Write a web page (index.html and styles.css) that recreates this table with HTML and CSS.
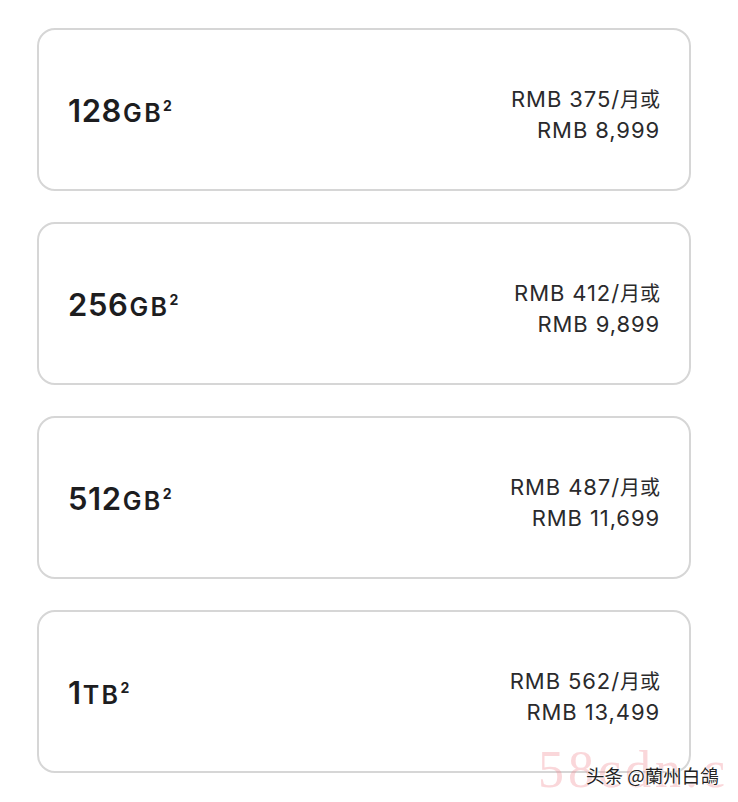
FILE: index.html
```html
<!DOCTYPE html>
<html lang="zh-CN">
<head>
<meta charset="utf-8">
<link rel="stylesheet" href="styles.css">
</head>
<body>
<div class="list">
  <div class="card">
    <div class="cap"><span class="num">128</span><span class="unit">GB</span><sup class="note">2</sup></div>
    <div class="price"><div>RMB 375/<span class="cjk">月或</span></div><div>RMB 8,999</div></div>
  </div>
  <div class="card">
    <div class="cap"><span class="num">256</span><span class="unit">GB</span><sup class="note">2</sup></div>
    <div class="price"><div>RMB 412/<span class="cjk">月或</span></div><div>RMB 9,899</div></div>
  </div>
  <div class="card">
    <div class="cap"><span class="num">512</span><span class="unit">GB</span><sup class="note">2</sup></div>
    <div class="price"><div>RMB 487/<span class="cjk">月或</span></div><div>RMB 11,699</div></div>
  </div>
  <div class="card">
    <div class="cap"><span class="num">1</span><span class="unit">TB</span><sup class="note">2</sup></div>
    <div class="price"><div>RMB 562/<span class="cjk">月或</span></div><div>RMB 13,499</div></div>
  </div>
</div>
<div class="wm">
  <span class="wm-bg">58cdn.c</span>
  <span class="wm-fg">头条 @蘭州白鴿</span>
</div>
</body>
</html>
```
FILE: styles.css
```css
html, body {
  margin: 0;
  background: #fff;
}
body {
  width: 738px;
  height: 802px;
  overflow: hidden;
  position: relative;
  font-family: Inter, "Noto Sans CJK SC", sans-serif;
  color: #1d1d1f;
}
.list {
  display: flex;
  flex-direction: column;
  gap: 31px;
  padding: 28px 47px 0 37px;
}
.card {
  box-sizing: border-box;
  height: 163px;
  border: 2px solid #d6d6d6;
  border-radius: 18px;
  display: flex;
  justify-content: space-between;
  align-items: center;
  padding: 0 29px 0 29px;
}
.cap {
  font-weight: 600;
  display: flex;
  align-items: baseline;
  margin-top: 2px;
}
.num {
  font-size: 31px;
  letter-spacing: 0.6px;
}
.unit {
  font-size: 25px;
  letter-spacing: 2.4px;
  margin-left: 1px;
}
.note {
  font-size: 14px;
  font-weight: 700;
  align-self: flex-start;
  margin-top: 5px;
  margin-left: 0;
}
.price {
  text-align: right;
  font-size: 22px;
  line-height: 31px;
  letter-spacing: 0.9px;
  color: #2a2a2c;
  padding-top: 10px;
}
.cjk {
  font-family: "Noto Sans CJK SC", sans-serif;
  font-size: 20px;
  letter-spacing: 0;
}
.wm {
  position: absolute;
  left: 536px;
  top: 742px;
  width: 202px;
  height: 60px;
}
.wm-bg {
  position: absolute;
  left: 2px;
  top: -2px;
  font-family: "Liberation Serif", serif;
  font-size: 52px;
  color: rgba(240, 140, 150, 0.35);
  white-space: nowrap;
  letter-spacing: 4px;
}
.wm-fg {
  position: absolute;
  left: 50px;
  top: 20px;
  font-family: "Noto Sans CJK SC", sans-serif;
  font-size: 18.5px;
  color: #222;
  white-space: nowrap;
  text-shadow: 0 0 2px #fff, 0 0 2px #fff, 0 0 2px #fff;
}
```
